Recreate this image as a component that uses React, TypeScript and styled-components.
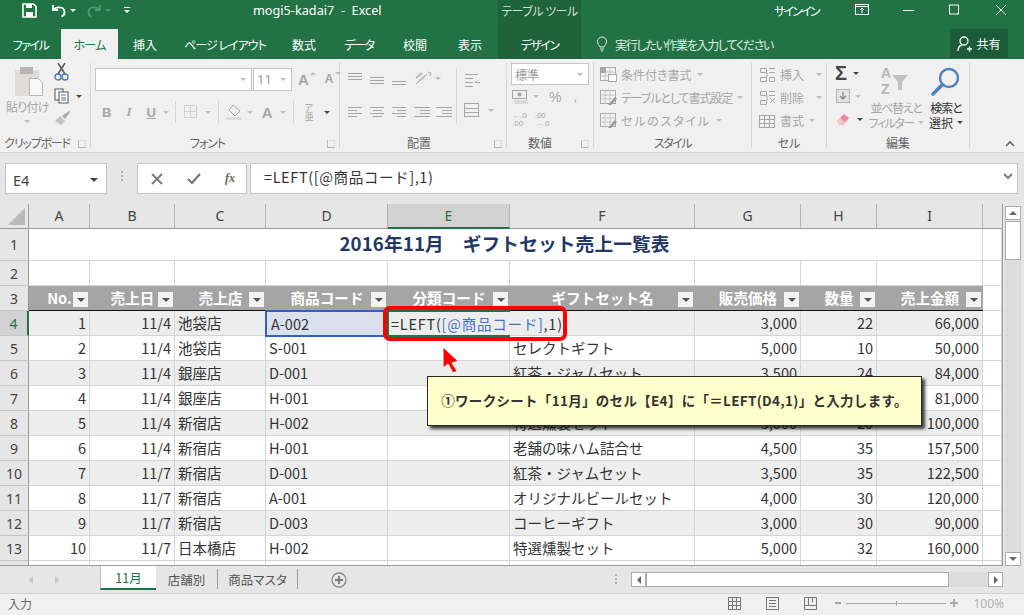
import styled, { createGlobalStyle } from "styled-components";

const JP = `"Noto Sans CJK JP", "Noto Sans", sans-serif`;
const GRID = "#d4d4d4";
const GREEN = "#217346";
const DIM = "#a6a6a6";

const Global = createGlobalStyle`
  html, body { margin: 0; padding: 0; overflow: hidden; background: #e6e6e6; }
  * { box-sizing: border-box; }
`;

const Page = styled.div`
  position: relative;
  width: 1024px;
  height: 615px;
  overflow: hidden;
  font-family: ${JP};
  color: #333;
`;

const Gap = styled.span<{ $w: number }>`
  flex: none;
  width: ${(p) => p.$w}px;
`;

const Icon = styled.svg`
  display: block;
  flex: none;
  fill: none;
`;

/* ---------- title bar + tabs ---------- */
const TitleBar = styled.div`
  display: grid;
  grid-template-columns: 498px 83px 1fr;
  height: 29px;
  background: ${GREEN};
  color: #fff;
  font-size: 12px;
  font-feature-settings: "palt";
`;

const QuickAccess = styled.div`
  display: flex;
  align-items: center;
  padding: 0 0 9px 22px;
`;

const WindowTitle = styled.span`
  margin-left: 122px;
  font-family: "Noto Sans", sans-serif;
  font-size: 12.7px;
  white-space: pre;
`;

const ToolsLabel = styled.div`
  display: flex;
  align-items: center;
  justify-content: center;
  padding-bottom: 9px;
  background: #1e6339;
  color: #cfe0d6;
  font-size: 12px;
  letter-spacing: -0.5px;
`;

const WindowControls = styled.div`
  display: flex;
  align-items: center;
  padding: 0 0 9px 193px;
  font-size: 12px;
`;

const SignIn = styled.span`
  letter-spacing: -1.8px;
`;

const TabBar = styled.div`
  display: flex;
  height: 30px;
  background: ${GREEN};
  color: #fff;
  font-size: 12px;
  font-feature-settings: "palt";
`;

const Tab = styled.div<{ $w: number; $active?: boolean; $tool?: boolean; $ls?: number }>`
  display: flex;
  align-items: center;
  justify-content: center;
  width: ${(p) => p.$w}px;
  background: ${(p) => (p.$active ? "#f0f0f0" : p.$tool ? "#1e6339" : "transparent")};
  color: ${(p) => (p.$active ? GREEN : "#fff")};
  letter-spacing: ${(p) => p.$ls ?? 0}px;
`;

const TellMe = styled.div`
  display: flex;
  align-items: center;
  gap: 7px;
  margin-left: 15px;
  color: #e0ebe5;
  letter-spacing: -1.3px;
`;

const ShareButton = styled.div`
  display: flex;
  align-items: center;
  justify-content: center;
  gap: 3px;
  width: 58px;
  height: 29px;
  margin-left: auto;
  margin-right: 16px;
  background: #1b5c38;
`;

/* ---------- ribbon ---------- */
const Ribbon = styled.div`
  position: relative;
  display: flex;
  height: 94px;
  padding-top: 4px;
  background: #f0f0f0;
  border-bottom: 1px solid #d2d2d2;
  font-size: 12px;
  font-feature-settings: "palt";
  color: ${DIM};
`;

const Group = styled.div<{ $w: number }>`
  position: relative;
  display: flex;
  flex-direction: column;
  flex: none;
  width: ${(p) => p.$w}px;
  height: 85px;
  border-right: 1px solid #d4d4d4;
`;

const GroupBody = styled.div<{ $pad?: number }>`
  display: flex;
  flex: none;
  height: 70px;
  padding-left: ${(p) => p.$pad ?? 0}px;
`;

const GroupLabel = styled.div<{ $pr?: number; $ls?: number }>`
  flex: none;
  height: 15px;
  line-height: 20px;
  padding-right: ${(p) => p.$pr ?? 0}px;
  text-align: center;
  white-space: nowrap;
  color: #666;
  letter-spacing: ${(p) => p.$ls ?? 0}px;
`;

const Launcher = styled.span`
  position: absolute;
  right: 4px;
  bottom: 0;
  width: 8px;
  height: 8px;
  border-left: 1px solid #b5b5b5;
  border-bottom: 1px solid #b5b5b5;
  border-top: 1px solid #dcdcdc;
  border-right: 1px solid #dcdcdc;
`;

const Column = styled.div<{ $w?: number; $pt?: number; $ml?: number; $center?: boolean }>`
  display: flex;
  flex-direction: column;
  flex: none;
  align-items: ${(p) => (p.$center ? "center" : "stretch")};
  width: ${(p) => (p.$w ? `${p.$w}px` : "auto")};
  margin-left: ${(p) => p.$ml ?? 0}px;
  padding-top: ${(p) => p.$pt ?? 0}px;
`;

const RuledColumn = styled(Column)`
  height: 56px;
  margin-top: 5px;
  padding-left: 7px;
  border-left: 1px solid #d4d4d4;
`;

const Row = styled.div<{ $gap?: number; $h?: number; $pl?: number; $mt?: number }>`
  display: flex;
  flex: none;
  align-items: center;
  gap: ${(p) => p.$gap ?? 0}px;
  height: ${(p) => (p.$h ? `${p.$h}px` : "auto")};
  margin-top: ${(p) => p.$mt ?? 0}px;
  padding-left: ${(p) => p.$pl ?? 0}px;
`;

const BigLabel = styled.div<{ $dark?: boolean; $left?: boolean; $ls?: number; $mt?: number }>`
  display: flex;
  align-items: center;
  justify-content: ${(p) => (p.$left ? "flex-start" : "center")};
  height: 15px;
  margin-top: ${(p) => p.$mt ?? 0}px;
  white-space: nowrap;
  color: ${(p) => (p.$dark ? "#333" : DIM)};
  letter-spacing: ${(p) => p.$ls ?? 0}px;
`;

const Caret = styled.span<{ $dark?: boolean; $ml?: number; $y?: number; $up?: boolean; $color?: string; $size?: number }>`
  display: inline-block;
  flex: none;
  width: 0;
  height: 0;
  margin-left: ${(p) => p.$ml ?? 4}px;
  transform: translateY(${(p) => p.$y ?? 0}px) ${(p) => (p.$up ? "rotate(180deg)" : "")};
  border-left: ${(p) => p.$size ?? 3}px solid transparent;
  border-right: ${(p) => p.$size ?? 3}px solid transparent;
  border-top: ${(p) => p.$size ?? 3}px solid ${(p) => p.$color ?? (p.$dark ? "#444" : "#bdbdbd")};
`;

const Field = styled.div<{ $w: number; $h?: number; $mt?: number; $ml?: number }>`
  display: flex;
  align-items: center;
  justify-content: space-between;
  flex: none;
  width: ${(p) => p.$w}px;
  height: ${(p) => p.$h ?? 23}px;
  margin-top: ${(p) => p.$mt ?? 0}px;
  margin-left: ${(p) => p.$ml ?? 0}px;
  padding: 0 5px 0 3px;
  background: #fff;
  border: 1px solid #c6c6c6;
  color: #9a9a9a;
`;

const SizeText = styled.span`
  font-family: "Noto Sans", sans-serif;
  font-size: 13px;
`;

const Letter = styled.span<{ $size?: number; $underline?: boolean; $serif?: boolean; $ml?: number; $color?: string }>`
  flex: none;
  margin-left: ${(p) => p.$ml ?? 0}px;
  font-family: ${(p) => (p.$serif ? `"Liberation Serif", serif` : `"Liberation Sans", sans-serif`)};
  font-weight: 700;
  font-style: ${(p) => (p.$serif ? "italic" : "normal")};
  font-size: ${(p) => p.$size ?? 12}px;
  text-decoration: ${(p) => (p.$underline ? "underline" : "none")};
  color: ${(p) => p.$color ?? DIM};
`;

const VRule = styled.span<{ $ml?: number }>`
  flex: none;
  width: 1px;
  height: 22px;
  margin-left: ${(p) => p.$ml ?? 0}px;
  background: #d4d4d4;
`;

const VerticalText = styled.span`
  margin-left: 1px;
  line-height: 9px;
  font-size: 9px;
  color: ${DIM};
`;

const Symbol = styled.span<{ $ml?: number; $size?: number }>`
  margin-left: ${(p) => p.$ml ?? 0}px;
  font-family: "Liberation Sans", sans-serif;
  font-size: ${(p) => p.$size ?? 14}px;
`;

const DecimalText = styled.span<{ $ml?: number }>`
  margin-left: ${(p) => p.$ml ?? 0}px;
  font-family: "Liberation Sans", sans-serif;
  font-size: 8px;
  line-height: 8px;
`;

const Sigma = styled.span`
  font-family: "Liberation Sans", sans-serif;
  font-weight: 700;
  font-size: 20px;
  line-height: 20px;
  color: #444;
`;

const StyleItem = styled.div<{ $ls?: number }>`
  display: flex;
  flex: none;
  align-items: center;
  gap: 3px;
  height: 23px;
  white-space: nowrap;
  letter-spacing: ${(p) => p.$ls ?? 0}px;
`;

/* ---------- formula bar ---------- */
const FormulaArea = styled.div`
  display: flex;
  align-items: flex-start;
  height: 51px;
  padding: 10px 5px 0 5px;
  background: #e6e6e6;
`;

const NameBox = styled.div`
  display: flex;
  align-items: center;
  justify-content: space-between;
  width: 102px;
  height: 31px;
  padding: 3px 8px 0 7px;
  background: #fff;
  border: 1px solid #c6c6c6;
  font-family: "Noto Sans", sans-serif;
  font-size: 14.5px;
  color: #444;
`;

const Dots = styled.div`
  display: flex;
  flex-direction: column;
  gap: 2px;
  width: 30px;
  height: 31px;
  padding: 8px 0 0 14px;
  & > i { width: 2px; height: 2px; background: #b0b0b0; }
`;

const FormulaButtons = styled.div`
  display: flex;
  align-items: center;
  justify-content: space-between;
  width: 110px;
  height: 31px;
  padding: 0 11px 0 13px;
  background: #fff;
  border: 1px solid #c6c6c6;
`;

const FormulaInput = styled.div`
  display: flex;
  align-items: center;
  justify-content: space-between;
  width: 768px;
  height: 31px;
  margin-left: 3px;
  padding: 0 4px 4px 13px;
  background: #fff;
  border: 1px solid #c6c6c6;
  font-size: 14.6px;
  letter-spacing: 0.55px;
`;

/* ---------- sheet ---------- */
const SheetArea = styled.div`
  display: flex;
  height: 362px;
  background: #e6e6e6;
`;

const Sheet = styled.div`
  flex: none;
  width: 1003px;
  height: 362px;
  overflow: hidden;
  background: #fff;
  border-right: 1px solid #9b9b9b;
  border-bottom: 1px solid #9b9b9b;
`;

const COLUMNS = "29px 61px 85px 91px 122px 122px 185px 106px 76px 106px 1fr";

const HeaderRow = styled.div`
  display: grid;
  grid-template-columns: ${COLUMNS};
  height: 25px;
  background: #e6e6e6;
  border-bottom: 1px solid #9b9b9b;
`;

const Corner = styled.div`
  position: relative;
  background: #e6e6e6;
  border-right: 1px solid #9b9b9b;
  &::after {
    content: "";
    position: absolute;
    right: 3px;
    bottom: 3px;
    border-left: 17px solid transparent;
    border-bottom: 17px solid #b9b9b9;
  }
`;

const ColHead = styled.div<{ $active?: boolean }>`
  display: flex;
  align-items: center;
  justify-content: center;
  margin-bottom: ${(p) => (p.$active ? "-1px" : "0")};
  padding-bottom: 1px;
  background: ${(p) => (p.$active ? "#d2d2d2" : "#e6e6e6")};
  border-right: 1px solid #b4b4b4;
  border-bottom: ${(p) => (p.$active ? `2px solid ${GREEN}` : "none")};
  font-family: "Noto Sans", sans-serif;
  font-size: 14px;
  color: ${(p) => (p.$active ? GREEN : "#444")};
`;

const SheetRow = styled.div<{ $h?: number; $band?: boolean }>`
  display: grid;
  grid-template-columns: ${COLUMNS};
  height: ${(p) => p.$h ?? 25}px;
  background: ${(p) => (p.$band ? "#ededed" : "#fff")};
`;

const RowHead = styled.div<{ $active?: boolean }>`
  display: flex;
  align-items: center;
  justify-content: center;
  background: ${(p) => (p.$active ? "#d2d2d2" : "#e6e6e6")};
  border-right: ${(p) => (p.$active ? `2px solid ${GREEN}` : "1px solid #9b9b9b")};
  border-bottom: 1px solid #c6c6c6;
  font-family: "Noto Sans", sans-serif;
  font-size: 14px;
  color: ${(p) => (p.$active ? GREEN : "#444")};
`;

const Cell = styled.div<{ $right?: boolean }>`
  display: flex;
  align-items: center;
  justify-content: ${(p) => (p.$right ? "flex-end" : "flex-start")};
  padding: 0 3px 2px 3px;
  border-right: 1px solid ${GRID};
  border-bottom: 1px solid ${GRID};
  font-size: 14.5px;
  color: #333;
  white-space: nowrap;
  overflow: hidden;
`;

const BlankCell = styled(Cell)`
  background: #fff;
`;

const TitleCell = styled.div`
  grid-column: 2 / 11;
  display: flex;
  align-items: center;
  justify-content: center;
  padding: 0 2px 4px 0;
  border-right: 1px solid ${GRID};
  border-bottom: 1px solid ${GRID};
  font-size: 18.67px;
  font-weight: 700;
  letter-spacing: 0.15px;
  color: #1f3864;
  white-space: pre;
`;

const TableHead = styled.div`
  position: relative;
  display: flex;
  align-items: center;
  justify-content: center;
  padding-bottom: 2px;
  background: #a5a5a5;
  border-bottom: 1px solid #111;
  font-size: 14.6px;
  font-weight: 700;
  color: #fff;
  white-space: nowrap;
`;

const FilterBtn = styled.span`
  position: absolute;
  right: 2px;
  bottom: 3px;
  display: flex;
  align-items: center;
  justify-content: center;
  width: 15px;
  height: 15px;
  background: #f2f2f2;
  &::after {
    content: "";
    border-left: 4px solid transparent;
    border-right: 4px solid transparent;
    border-top: 4px solid #555;
  }
`;

const SelectedCell = styled(Cell)`
  margin: -1px 0 -1px -1px;
  padding: 0 3px 0 4px;
  background: #dae1ec;
  border: 2px solid #2f63b8;
  z-index: 1;
`;

const EditCell = styled(Cell)`
  margin: -1px 0 -1px -1px;
  padding: 0 3px 0 2px;
  border: none;
  border-left: 2px solid ${GREEN};
  border-bottom: 2px solid ${GREEN};
  border-top: 2px solid ${GREEN};
  letter-spacing: 0.75px;
  overflow: visible;
  z-index: 2;
`;

const Ref = styled.span`
  color: #4472c4;
`;

const Scrollbar = styled.div`
  display: flex;
  flex-direction: column;
  justify-content: space-between;
  width: 16px;
  height: 362px;
  margin-left: 2px;
  padding-top: 2px;
`;

const ScrollArrow = styled.div<{ $dir: "up" | "down" | "left" | "right" }>`
  display: flex;
  flex: none;
  align-items: center;
  justify-content: center;
  width: ${(p) => (p.$dir === "up" || p.$dir === "down" ? 16 : 15)}px;
  height: ${(p) => (p.$dir === "up" || p.$dir === "down" ? 14 : 15)}px;
  background: #fff;
  border: 1px solid #ababab;
  &::after {
    content: "";
    border: 4px solid transparent;
    ${(p) =>
      p.$dir === "up"
        ? "border-bottom: 4px solid #666; margin-top: -4px;"
        : p.$dir === "down"
          ? "border-top: 4px solid #666; margin-top: 4px;"
          : p.$dir === "left"
            ? "border-right: 4px solid #666; margin-left: -4px;"
            : "border-left: 4px solid #666; margin-left: 4px;"}
  }
`;

const ScrollTrack = styled.div`
  flex: 1;
  background: #dcdcdc;
`;

const ScrollThumb = styled.div`
  width: 16px;
  height: 39px;
  margin-top: 1px;
  background: #fff;
  border: 1px solid #ababab;
`;

/* ---------- sheet tabs ---------- */
const TabsBar = styled.div`
  display: flex;
  align-items: flex-start;
  height: 28px;
  background: #e6e6e6;
  border-bottom: 1px solid #d2d2d2;
  font-size: 12.5px;
  font-feature-settings: "palt";
`;

const TabNav = styled.div`
  display: flex;
  align-items: center;
  gap: 22px;
  width: 100px;
  height: 27px;
  padding-left: 25px;
`;

const NavArrow = styled.i<{ $next?: boolean }>`
  border: 4px solid transparent;
  border-right-color: ${(p) => (p.$next ? "transparent" : "#c6c6c6")};
  border-left-color: ${(p) => (p.$next ? "#c6c6c6" : "transparent")};
`;

const SheetTab = styled.div<{ $w: number; $active?: boolean; $sep?: boolean }>`
  display: flex;
  align-items: center;
  justify-content: center;
  flex: none;
  width: ${(p) => p.$w}px;
  height: ${(p) => (p.$active ? 24 : 20)}px;
  margin-top: ${(p) => (p.$active ? 0 : 3)}px;
  background: ${(p) => (p.$active ? "#fff" : "transparent")};
  border-right: ${(p) => (p.$sep ? "1px solid #9b9b9b" : "none")};
  border-left: ${(p) => (p.$active ? "1px solid #c0c0c0" : "none")};
  border-bottom: ${(p) => (p.$active ? `2px solid ${GREEN}` : "none")};
  color: ${(p) => (p.$active ? GREEN : "#555")};
`;

const AddSheet = styled.div`
  display: flex;
  align-items: center;
  margin-left: 33px;
  height: 27px;
`;

const Grip = styled(Dots)`
  width: 2px;
  height: 14px;
  margin: 8px 14px 0 auto;
  padding: 0;
`;

const HScroll = styled.div`
  display: flex;
  align-items: center;
  flex: none;
  width: 372px;
  height: 15px;
  margin: 6px 21px 0 0;
  background: #dcdcdc;
`;

const HThumb = styled.div`
  width: 303px;
  height: 15px;
  background: #fff;
  border: 1px solid #ababab;
`;

const HSpacer = styled.div`
  flex: 1;
`;

/* ---------- status bar ---------- */
const StatusBar = styled.div`
  display: flex;
  align-items: center;
  height: 21px;
  padding: 0 20px 2px 8px;
  background: #f0f0f0;
  font-size: 12px;
  color: #6a6a6a;
`;

const StatusRight = styled.div`
  display: flex;
  align-items: center;
  margin-left: auto;
`;

const ZoomSlider = styled.div`
  position: relative;
  width: 100px;
  height: 1px;
  margin: 0 4px;
  background: #a8a8a8;
  &::after {
    content: "";
    position: absolute;
    left: 50%;
    top: -2px;
    width: 1px;
    height: 5px;
    background: #a8a8a8;
  }
`;

const Percent = styled.span`
  margin-left: 14px;
  font-family: "Noto Sans", sans-serif;
  font-size: 12px;
  color: #b0b0b0;
`;

/* ---------- overlays ---------- */
const RedFrame = styled.div`
  position: absolute;
  left: 383px;
  top: 306px;
  width: 184px;
  height: 35px;
  border: 4px solid #ff0000;
  border-radius: 7px;
  z-index: 3;
`;

const Arrow = styled.svg`
  position: absolute;
  left: 440px;
  top: 346px;
  z-index: 3;
`;

const Callout = styled.div`
  position: absolute;
  left: 427px;
  top: 376px;
  display: flex;
  align-items: center;
  justify-content: center;
  width: 495px;
  height: 50px;
  padding-bottom: 2px;
  background: #ffffcc;
  border: 1px solid #2a2a20;
  box-shadow: 3px 3px 3px rgba(0, 0, 0, 0.75);
  font-size: 13.5px;
  font-weight: 700;
  color: #333;
  letter-spacing: 0.3px;
  white-space: nowrap;
  z-index: 4;
`;

const CollapseBox = styled.div`
  position: absolute;
  right: 9px;
  bottom: 5px;
`;

/* ---------- icons ---------- */
const AlignLines = ({ rows, y = 0 }: { rows: [number, number][]; y?: number }) => (
  <Icon width={16} height={16}>
    {rows.map(([x, w], i) => (
      <rect key={i} x={x} y={y + i * 3} width={w} height={1} fill={DIM} />
    ))}
  </Icon>
);

const CellIcon = ({ kind }: { kind: "cond" | "table" | "style" }) => (
  <Icon width={18} height={16}>
    <rect x={0.5} y={0.5} width={15} height={13} fill="#f4f4f4" stroke={DIM} />
    <path d="M0 5h16M0 9h16M5 0v14M10 0v14" stroke="#c4c4c4" />
    {kind === "cond" && <rect x={0} y={0} width={6} height={6} fill={DIM} />}
    {kind === "cond" && <rect x={8.5} y={7.5} width={8} height={7} fill="#fff" stroke={DIM} />}
    {kind !== "cond" && <path d="M8 15l7-8 2 2-6 6z" fill="#9a9a9a" />}
  </Icon>
);

const CellOpIcon = ({ op }: { op: "insert" | "delete" | "format" }) => (
  <Icon width={18} height={16}>
    {op === "format" ? (
      <>
        <rect x={0.5} y={2.5} width={15} height={12} stroke={DIM} />
        <path d="M0 6.500h16M0 10.500h16M5.500 2v13M10.500 2v13" stroke={DIM} />
      </>
    ) : (
      <>
        <path d="M1.500 1.500h6v4h-6zM1.500 10.500h6v4h-6zM8 5.500v5" stroke={DIM} />
        <path d="M10 1.500h6M10 5.500h6" stroke={DIM} />
        {op === "delete" ? (
          <path d="M11 8l5 5M16 8l-5 5" stroke={DIM} />
        ) : (
          <path d="M10.500 10.500h5v4h-5z" stroke={DIM} />
        )}
      </>
    )}
  </Icon>
);

const rows = [
  ["1", "11/4", "池袋店", "A-002", "", "3,000", "22", "66,000"],
  ["2", "11/4", "池袋店", "S-001", "セレクトギフト", "5,000", "10", "50,000"],
  ["3", "11/4", "銀座店", "D-001", "紅茶・ジャムセット", "3,500", "24", "84,000"],
  ["4", "11/4", "銀座店", "H-001", "老舗の味ハム詰合せ", "4,500", "18", "81,000"],
  ["5", "11/4", "新宿店", "H-002", "特選燻製セット", "5,000", "20", "100,000"],
  ["6", "11/4", "新宿店", "H-001", "老舗の味ハム詰合せ", "4,500", "35", "157,500"],
  ["7", "11/7", "新宿店", "D-001", "紅茶・ジャムセット", "3,500", "35", "122,500"],
  ["8", "11/7", "新宿店", "A-001", "オリジナルビールセット", "4,000", "30", "120,000"],
  ["9", "11/7", "新宿店", "D-003", "コーヒーギフト", "3,000", "30", "90,000"],
  ["10", "11/7", "日本橋店", "H-002", "特選燻製セット", "5,000", "32", "160,000"],
];

const headers = ["No.", "売上日", "売上店", "商品コード", "分類コード", "ギフトセット名", "販売価格", "数量", "売上金額"];
const colLetters = ["A", "B", "C", "D", "E", "F", "G", "H", "I"];

export default function App() {
  return (
    <Page>
      <Global />
      <TitleBar>
        <QuickAccess>
          <Icon width={15} height={15}>
            <path d="M1 1h10.500L14 3.500V14H1z" stroke="#fff" strokeWidth="1.600" />
            <rect x={4} y={1} width={6} height={4} fill="#fff" />
            <rect x={4} y={9} width={7} height={5} fill="#fff" />
          </Icon>
          <Gap $w={14} />
          <Icon width={16} height={15}>
            <path d="M2 2v5h5M2.500 7C5 3.500 13 3 13.500 9c.2 2.500-1.500 4-3 4.500" stroke="#fff" strokeWidth="1.800" />
          </Icon>
          <Caret $ml={3} $color="#fff" />
          <Gap $w={10} />
          <Icon width={16} height={15}>
            <path d="M14 2v5H9M13.500 7C11 3.500 3 3 2.500 9c-.2 2.500 1.500 4 3 4.500" stroke="#4f9a70" strokeWidth="1.800" />
          </Icon>
          <Caret $ml={3} $color="#4f9a70" />
          <Gap $w={12} />
          <Icon width={8} height={10}>
            <rect x={1} y={2} width={6} height={1} fill="#fff" />
            <path d="M1 5h6l-3 3z" fill="#fff" />
          </Icon>
          <WindowTitle>mogi5-kadai7  -  Excel</WindowTitle>
        </QuickAccess>
        <ToolsLabel>テーブル ツール</ToolsLabel>
        <WindowControls>
          <SignIn>サインイン</SignIn>
          <Gap $w={36} />
          <Icon width={14} height={12}>
            <rect x={0.5} y={0.5} width={13} height={10} stroke="#fff" />
            <path d="M0 2.500h14M7 9V4M5 6l2-2 2 2" stroke="#fff" />
          </Icon>
          <Gap $w={34} />
          <Icon width={11} height={12}>
            <path d="M0 6.500h11" stroke="#fff" />
          </Icon>
          <Gap $w={35} />
          <Icon width={11} height={12}>
            <rect x={0.5} y={1} width={9} height={9} stroke="#fff" />
          </Icon>
          <Gap $w={35} />
          <Icon width={12} height={12}>
            <path d="M1 1l10 10M11 1L1 11" stroke="#fff" />
          </Icon>
        </WindowControls>
      </TitleBar>

      <TabBar>
        <Tab $w={61} $ls={-1.5}>ファイル</Tab>
        <Tab $w={57} $active $ls={-0.7}>ホーム</Tab>
        <Tab $w={54}>挿入</Tab>
        <Tab $w={106} $ls={-1}>ページ レイアウト</Tab>
        <Tab $w={52}>数式</Tab>
        <Tab $w={58} $ls={-1.5}>データ</Tab>
        <Tab $w={54}>校閲</Tab>
        <Tab $w={56}>表示</Tab>
        <Tab $w={83} $tool $ls={-1.5}>デザイン</Tab>
        <TellMe>
          <Icon width={12} height={16}>
            <path d="M4 11C3 9 1.500 8 1.500 5.500a4.500 4.500 0 0 1 9 0C10.500 8 9 9 8 11zM4 13h4M5 15h2" stroke="#e6efe9" />
          </Icon>
          実行したい作業を入力してください
        </TellMe>
        <ShareButton>
          <Icon width={16} height={17}>
            <circle cx={7} cy={6} r={4} stroke="#fff" strokeWidth="1.300" />
            <path d="M1 16c0-4 2-5.500 4-6M10 14h5M12.500 11.500v5" stroke="#fff" strokeWidth="1.300" />
          </Icon>
          共有
        </ShareButton>
      </TabBar>

      <Ribbon>
        <Group $w={91}>
          <GroupBody $pad={6}>
            <Column $w={43}>
              <Row $pl={9} $h={33}>
                <Icon width={29} height={33}>
                  <rect x={0} y={7} width={24} height={26} fill="#e0dcdc" />
                  <rect x={5} y={4} width={13} height={7} fill="#b9b3b3" />
                  <path d="M14.500 15.500h9l4 4v13h-13z" fill="#f8f8f8" stroke="#b5b5b5" />
                </Icon>
              </Row>
              <BigLabel $left $ls={-0.7} $mt={3}>貼り付け</BigLabel>
              <Row $pl={18} $mt={6}>
                <Caret $ml={0} />
              </Row>
            </Column>
            <Column $ml={5}>
              <Icon width={18} height={20}>
                <path d="M4 0l7 11M11 0L4 11" stroke="#555" strokeWidth="1.500" />
                <circle cx={4} cy={14} r={3} stroke="#3f78b5" strokeWidth="1.300" />
                <circle cx={11} cy={14} r={3} stroke="#3f78b5" strokeWidth="1.300" />
              </Icon>
              <Row $mt={5}>
                <Icon width={16} height={16}>
                  <rect x={1} y={1} width={8} height={11} fill="#f6f6f6" stroke="#555" />
                  <rect x={5} y={4} width={9} height={11} fill="#fff" stroke="#555" />
                  <path d="M7 7h5M7 10h5M7 12h5" stroke="#3f78b5" />
                </Icon>
                <Caret $dark $ml={6} />
              </Row>
              <Row $mt={6}>
                <Icon width={17} height={16}>
                  <path d="M1 11l5-5 5 5-4 4z" fill="#c9c3c3" />
                  <path d="M8 6l7-5 1 1-5 7z" fill="#a8a8a8" />
                </Icon>
              </Row>
            </Column>
          </GroupBody>
          <GroupLabel $pr={16} $ls={-1.2}>クリップボード</GroupLabel>
          <Launcher />
        </Group>

        <Group $w={249}>
          <GroupBody $pad={4}>
            <Column>
              <Row $h={26} $mt={3}>
                <Field $w={157}>
                  <span />
                  <Caret $ml={0} />
                </Field>
                <Field $w={39} $ml={1}>
                  <SizeText>11</SizeText>
                  <Caret $ml={0} />
                </Field>
                <Letter $size={15} $ml={6}>A</Letter>
                <Caret $ml={1} $y={-6} $up />
                <Letter $size={12} $ml={9}>A</Letter>
                <Caret $ml={1} $y={-6} />
              </Row>
              <Row $h={32} $pl={7} $mt={4}>
                <Letter $size={13}>B</Letter>
                <Letter $size={13} $serif $ml={15}>I</Letter>
                <Letter $size={13} $underline $ml={15}>U</Letter>
                <Caret $ml={7} />
                <VRule $ml={6} />
                <Gap $w={8} />
                <Icon width={14} height={14}>
                  <rect x={0.5} y={0.5} width={12} height={12} stroke="#b5b5b5" strokeDasharray="1 1" />
                  <path d="M0.500 6.500h12M6.500 0.500v12" stroke="#b5b5b5" strokeDasharray="1 1" />
                </Icon>
                <Caret $ml={7} />
                <VRule $ml={7} />
                <Gap $w={7} />
                <Icon width={18} height={16}>
                  <path d="M7 1l7 6-5 5-6-6z" stroke={DIM} />
                  <rect x={0} y={13} width={16} height={3} fill="#dcdcdc" />
                </Icon>
                <Caret $ml={3} />
                <Letter $size={15} $ml={9}>A</Letter>
                <Caret $ml={7} />
                <VRule $ml={7} />
                <Gap $w={10} />
                <VerticalText>
                  ア<br />亜
                </VerticalText>
                <Caret $dark $ml={10} />
              </Row>
            </Column>
          </GroupBody>
          <GroupLabel $pr={15} $ls={-1}>フォント</GroupLabel>
          <Launcher />
        </Group>

        <Group $w={167}>
          <GroupBody $pad={8}>
            <Column>
              <Row $h={30} $gap={6}>
                <AlignLines rows={[[0, 14], [0, 14], [0, 14]]} y={3} />
                <AlignLines rows={[[0, 14], [0, 14], [0, 14]]} y={7} />
                <AlignLines rows={[[0, 14], [0, 14], [0, 14]]} y={11} />
                <Icon width={18} height={16}>
                  <path d="M2 14L13 4M14 2l3 1-1 3" stroke={DIM} />
                  <path d="M2 8l6-5M5 11l6-5" stroke="#bdbdbd" strokeWidth="2" />
                </Icon>
                <Caret $ml={-3} />
              </Row>
              <Row $h={32} $gap={6} $mt={4}>
                <AlignLines rows={[[0, 14], [0, 9], [0, 14], [0, 9]]} y={2} />
                <AlignLines rows={[[0, 14], [3, 9], [0, 14], [3, 9]]} y={2} />
                <AlignLines rows={[[0, 14], [5, 9], [0, 14], [5, 9]]} y={2} />
                <AlignLines rows={[[0, 16], [6, 10], [6, 10], [0, 16]]} y={2} />
                <AlignLines rows={[[0, 16], [6, 10], [6, 10], [0, 16]]} y={2} />
              </Row>
            </Column>
            <RuledColumn $ml={4}>
              <Row $h={24}>
                <Icon width={17} height={15}>
                  <path d="M1 1.500h13M1 5.500h8M1 9.500h8M1 13.500h8M11 9.500h5M11 9.500l2-2" stroke={DIM} />
                </Icon>
              </Row>
              <Row $h={30} $mt={3}>
                <Icon width={16} height={15}>
                  <rect x={0.5} y={0.5} width={14} height={13} stroke={DIM} />
                  <path d="M0 5.500h15M0 9.500h15" stroke={DIM} />
                </Icon>
                <Caret $ml={8} />
              </Row>
            </RuledColumn>
          </GroupBody>
          <GroupLabel $pr={8}>配置</GroupLabel>
          <Launcher />
        </Group>

        <Group $w={87}>
          <GroupBody $pad={4}>
            <Column>
              <Field $w={78} $h={22}>
                標準
                <Caret $ml={0} />
              </Field>
              <Row $h={23} $pl={1}>
                <Icon width={18} height={14}>
                  <rect x={0.5} y={0.5} width={14} height={8} stroke={DIM} />
                  <path d="M2 11h14M2 13h14" stroke="#c6c6c6" />
                  <circle cx={7.500} cy={4.500} r={2} fill={DIM} />
                </Icon>
                <Caret $ml={3} />
                <Symbol $ml={10}>%</Symbol>
                <Symbol $ml={12} $size={13}>,</Symbol>
              </Row>
              <Row $h={23} $pl={1} $gap={6}>
                <DecimalText>←.0<br />.00</DecimalText>
                <DecimalText $ml={2}>.00<br />→.0</DecimalText>
              </Row>
            </Column>
          </GroupBody>
          <GroupLabel $pr={20}>数値</GroupLabel>
          <Launcher />
        </Group>

        <Group $w={158}>
          <GroupBody $pad={6}>
            <Column>
              <StyleItem><CellIcon kind="cond" />条件付き書式<Caret $ml={2} /></StyleItem>
              <StyleItem $ls={-1.1}><CellIcon kind="table" />テーブルとして書式設定<Caret $ml={2} /></StyleItem>
              <StyleItem $ls={1.8}><CellIcon kind="style" />セルのスタイル<Caret $ml={2} /></StyleItem>
            </Column>
          </GroupBody>
          <GroupLabel $ls={-1.5}>スタイル</GroupLabel>
        </Group>

        <Group $w={75}>
          <GroupBody $pad={7}>
            <Column>
              <StyleItem><CellOpIcon op="insert" />挿入<Caret $ml={9} /></StyleItem>
              <StyleItem><CellOpIcon op="delete" />削除<Caret $ml={9} /></StyleItem>
              <StyleItem><CellOpIcon op="format" />書式<Caret $ml={2} /></StyleItem>
            </Column>
          </GroupBody>
          <GroupLabel>セル</GroupLabel>
        </Group>

        <Group $w={143}>
          <GroupBody $pad={8}>
            <Column $w={36}>
              <Row $h={20}>
                <Sigma>Σ</Sigma>
                <Caret $dark $ml={6} />
              </Row>
              <Row $h={26} $pl={1}>
                <Icon width={15} height={15}>
                  <rect x={0.5} y={0.5} width={13} height={13} fill="#e4e4e4" stroke="#b0b0b0" />
                  <path d="M7 3v7M4 7l3 3 3-3" stroke="#888" strokeWidth="1.300" />
                </Icon>
                <Caret $ml={4} />
              </Row>
              <Row $h={20} $pl={1}>
                <Icon width={15} height={14}>
                  <path d="M1 9l7-7 5 4-6 7H4z" fill="#ee8a9f" />
                  <path d="M1 9l3-3 5 4-3 3H4z" fill="#f7c3cf" />
                </Icon>
                <Caret $dark $ml={6} />
              </Row>
            </Column>
            <Column $w={50} $center $pt={3}>
              <Icon width={32} height={34}>
                <text x={1} y={12} fontFamily="Liberation Sans" fontWeight="700" fontSize={14} fill="#b5b5b5">A</text>
                <text x={1} y={28} fontFamily="Liberation Sans" fontWeight="700" fontSize={14} fill="#b5b5b5">Z</text>
                <path d="M12 9h16l-6 7v8h-4v-8z" fill="#c0c0c0" />
              </Icon>
              <BigLabel $ls={-1.3}>並べ替えと</BigLabel>
              <BigLabel $ls={-1.5}>フィルター<Caret /></BigLabel>
            </Column>
            <Column $w={34} $ml={8} $center $pt={3}>
              <Icon width={32} height={34}>
                <circle cx={19} cy={12} r={9} stroke="#4a83c0" strokeWidth="2.400" />
                <path d="M12 19L3 28" stroke="#4a83c0" strokeWidth="3.600" strokeLinecap="round" />
              </Icon>
              <BigLabel $dark $ls={-1}>検索と</BigLabel>
              <BigLabel $dark>選択<Caret $dark /></BigLabel>
            </Column>
          </GroupBody>
          <GroupLabel>編集</GroupLabel>
        </Group>
        <CollapseBox>
          <Icon width={10} height={7}>
            <path d="M1 6l4-4 4 4" stroke="#666" strokeWidth="1.600" />
          </Icon>
        </CollapseBox>
      </Ribbon>

      <FormulaArea>
        <NameBox>
          E4
          <Caret $dark $ml={0} $size={4} />
        </NameBox>
        <Dots>
          <i /><i /><i />
        </Dots>
        <FormulaButtons>
          <Icon width={12} height={12}>
            <path d="M1 1l10 10M11 1L1 11" stroke="#777" strokeWidth="1.800" />
          </Icon>
          <Icon width={14} height={12}>
            <path d="M1 6l4 4 8-9" stroke="#777" strokeWidth="2.200" />
          </Icon>
          <Letter $serif $size={12} $color="#666">fx</Letter>
        </FormulaButtons>
        <FormulaInput>
          <span>=LEFT([@商品コード],1)</span>
          <Icon width={10} height={8}>
            <path d="M1 1l4 4 4-4" stroke="#777" strokeWidth="1.800" />
          </Icon>
        </FormulaInput>
      </FormulaArea>

      <SheetArea>
        <Sheet>
          <HeaderRow>
            <Corner />
            {colLetters.map((c) => (
              <ColHead key={c} $active={c === "E"}>{c}</ColHead>
            ))}
            <div />
          </HeaderRow>
          <SheetRow $h={32}>
            <RowHead>1</RowHead>
            <TitleCell>2016年11月　ギフトセット売上一覧表</TitleCell>
            <Cell />
          </SheetRow>
          <SheetRow>
            <RowHead>2</RowHead>
            {colLetters.map((c) => (
              <Cell key={c} />
            ))}
            <Cell />
          </SheetRow>
          <SheetRow>
            <RowHead>3</RowHead>
            {headers.map((h) => (
              <TableHead key={h}>
                {h}
                <FilterBtn />
              </TableHead>
            ))}
            <Cell />
          </SheetRow>
          {rows.map((r, i) => (
            <SheetRow key={r[0]} $band={i % 2 === 0}>
              <RowHead $active={i === 0}>{i + 4}</RowHead>
              <Cell $right>{r[0]}</Cell>
              <Cell $right>{r[1]}</Cell>
              <Cell>{r[2]}</Cell>
              {i === 0 ? <SelectedCell>{r[3]}</SelectedCell> : <Cell>{r[3]}</Cell>}
              {i === 0 ? (
                <EditCell>
                  =LEFT(<Ref>[@商品コード]</Ref>,1)
                </EditCell>
              ) : (
                <Cell />
              )}
              <Cell>{r[4]}</Cell>
              <Cell $right>{r[5]}</Cell>
              <Cell $right>{r[6]}</Cell>
              <Cell $right>{r[7]}</Cell>
              <BlankCell />
            </SheetRow>
          ))}
          <SheetRow $h={5}>
            <RowHead />
            {colLetters.map((c) => (
              <Cell key={c} />
            ))}
            <Cell />
          </SheetRow>
        </Sheet>
        <Scrollbar>
          <ScrollArrow $dir="up" />
          <ScrollThumb />
          <ScrollTrack />
          <ScrollArrow $dir="down" />
        </Scrollbar>
      </SheetArea>

      <TabsBar>
        <TabNav>
          <NavArrow />
          <NavArrow $next />
        </TabNav>
        <SheetTab $w={56} $active>11月</SheetTab>
        <SheetTab $w={62} $sep>店舗別</SheetTab>
        <SheetTab $w={80} $sep>商品マスタ</SheetTab>
        <AddSheet>
          <Icon width={16} height={16}>
            <circle cx={8} cy={8} r={7} stroke="#8a8a8a" strokeWidth="1.300" />
            <path d="M8 4v8M4 8h8" stroke="#777" strokeWidth="1.800" />
          </Icon>
        </AddSheet>
        <Grip><i /><i /><i /></Grip>
        <HScroll>
          <ScrollArrow $dir="left" />
          <HThumb />
          <HSpacer />
          <ScrollArrow $dir="right" />
        </HScroll>
      </TabsBar>

      <StatusBar>
        入力
        <StatusRight>
          <Icon width={14} height={13}>
            <rect x={0.5} y={0.5} width={12} height={12} stroke="#777" />
            <path d="M4.500 0v13M8.500 0v13M0 4.500h13M0 8.500h13" stroke="#777" />
          </Icon>
          <Gap $w={24} />
          <Icon width={14} height={13}>
            <rect x={0.5} y={0.5} width={12} height={12} stroke="#777" />
            <path d="M3 3.500h7M3 6.500h7M3 9.500h7" stroke="#777" />
          </Icon>
          <Gap $w={24} />
          <Icon width={14} height={13}>
            <path d="M.5.500h12v12H.500zM.500 8.500h12M4.500.500v8M8.500.500v5" stroke="#777" />
          </Icon>
          <Gap $w={17} />
          <Icon width={7} height={5}>
            <rect y={1} width={6} height={2} fill="#a8a8a8" />
          </Icon>
          <ZoomSlider />
          <Icon width={9} height={9}>
            <path d="M4 0v8M0 4h8" stroke="#a8a8a8" strokeWidth="2" />
          </Icon>
          <Percent>100%</Percent>
        </StatusRight>
      </StatusBar>

      <RedFrame />
      <Arrow width={20} height={30} viewBox="0 0 20 30">
        <path d="M3 1v21l5-4 5 9 4-2-5-8 6-2z" fill="#ff0000" stroke="#fff" strokeWidth="1" />
      </Arrow>
      <Callout>①ワークシート「11月」のセル【E4】に「＝LEFT(D4,1)」と入力します。</Callout>
    </Page>
  );
}
